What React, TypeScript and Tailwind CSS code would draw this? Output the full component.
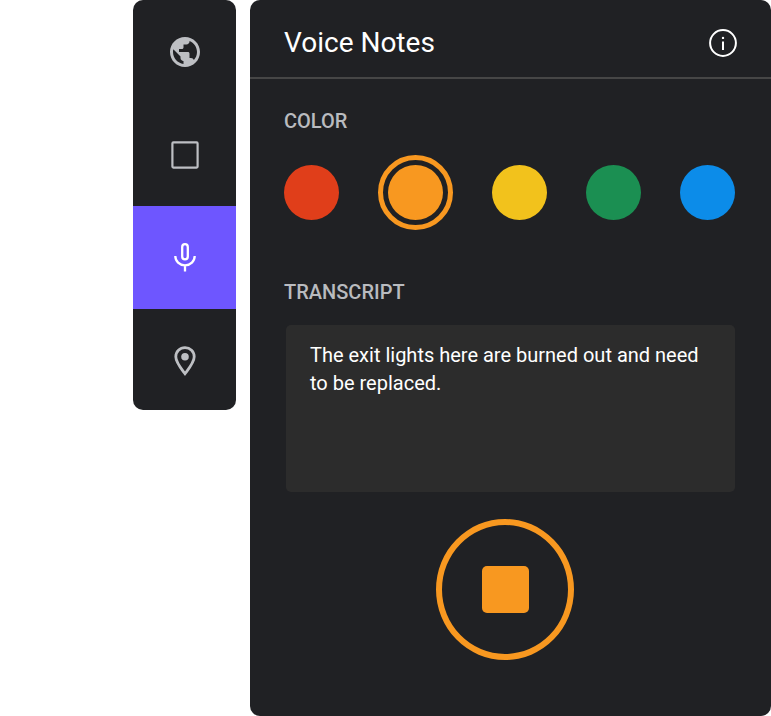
import { useState } from "react";
import { MdPublic } from "react-icons/md";

const swatches = [
  { name: "Red", fill: "bg-[#e03e1a]", ring: "border-[#e03e1a]" },
  { name: "Orange", fill: "bg-[#f89820]", ring: "border-[#f89820]" },
  { name: "Yellow", fill: "bg-[#f2c21c]", ring: "border-[#f2c21c]" },
  { name: "Green", fill: "bg-[#1b8f52]", ring: "border-[#1b8f52]" },
  { name: "Blue", fill: "bg-[#0c8ce9]", ring: "border-[#0c8ce9]" },
];

function SquareIcon() {
  return (
    <svg className="size-9" viewBox="0 0 36 36" fill="none" stroke="currentColor" strokeWidth="2.2" aria-hidden="true">
      <rect x="5.4" y="5.4" width="25.2" height="25.2" rx="1" />
    </svg>
  );
}

function MicIcon() {
  return (
    <svg className="size-9" viewBox="0 0 36 36" fill="none" stroke="currentColor" strokeWidth="2.3" aria-hidden="true">
      <rect x="15.2" y="4.1" width="5.6" height="15.2" rx="2.8" />
      <path d="M8.3 16c0 5.2 4.2 9.3 9.7 9.3s9.7-4.1 9.7-9.3M18 25.3v6.2" />
    </svg>
  );
}

function PinIcon() {
  return (
    <svg className="size-9" viewBox="0 0 36 36" aria-hidden="true">
      <path
        d="M18 5.6c-5.2 0-9.2 4-9.2 9.1 0 5.4 4.4 10.6 9.2 17 4.8-6.4 9.2-11.6 9.2-17 0-5.1-4-9.1-9.2-9.1Z"
        fill="none"
        stroke="currentColor"
        strokeWidth="2.8"
      />
      <circle cx="18" cy="14.8" r="3.8" fill="currentColor" />
    </svg>
  );
}

function InfoIcon() {
  return (
    <svg className="size-7" viewBox="0 0 28 28" aria-hidden="true">
      <circle cx="14" cy="14" r="12.9" fill="none" stroke="currentColor" strokeWidth="2" />
      <circle cx="14" cy="8.9" r="1.2" fill="currentColor" />
      <path d="M14 12.4v8.6" stroke="currentColor" strokeWidth="2" />
    </svg>
  );
}

const tools = [
  { name: "Map", icon: <MdPublic className="size-9" aria-hidden="true" /> },
  { name: "Shape", icon: <SquareIcon /> },
  { name: "Voice notes", icon: <MicIcon /> },
  { name: "Location", icon: <PinIcon /> },
];

export default function App() {
  const [tool, setTool] = useState("Voice notes");
  const [color, setColor] = useState("Orange");
  const [text, setText] = useState("The exit lights here are burned out and need to be replaced.");

  return (
    <div className="flex min-h-screen items-stretch gap-3.5 bg-white pl-[133px] font-[Roboto,sans-serif]">
      <nav className="flex w-[103px] shrink-0 flex-col self-start overflow-hidden rounded-[10px] bg-[#202124]" aria-label="Tools">
        {tools.map((t) => (
          <button
            key={t.name}
            type="button"
            aria-label={t.name}
            aria-pressed={tool === t.name}
            onClick={() => setTool(t.name)}
            className={`flex h-[103px] items-center justify-center last:h-[101px] ${
              tool === t.name ? "bg-[#6e56ff] text-white" : "text-[#bdbfc3]"
            }`}
          >
            {t.icon}
          </button>
        ))}
      </nav>

      <main className="min-w-0 flex-1 rounded-[10px] bg-[#202124] pb-14">
        <header className="flex items-center justify-between border-b-2 border-[#464646] px-[34px] pt-[25px] pb-4">
          <h1 className="text-[28px] leading-9 text-white">Voice Notes</h1>
          <button type="button" aria-label="About voice notes" className="text-white">
            <InfoIcon />
          </button>
        </header>

        <div className="pr-9 pl-[34px]">
          <h2 id="color-label" className="pt-7 text-xl leading-7 font-medium text-[#b9bbbf]">
            COLOR
          </h2>
          <div role="radiogroup" aria-labelledby="color-label" className="mt-5 flex h-[75px] items-center justify-between">
            {swatches.map((s) => (
              <input
                key={s.name}
                type="radio"
                name="color"
                aria-label={s.name}
                checked={color === s.name}
                onChange={() => setColor(s.name)}
                className={`size-[55px] shrink-0 appearance-none rounded-full bg-clip-content checked:size-[75px] checked:border-[5px] checked:p-[5px] ${s.fill} ${s.ring}`}
              />
            ))}
          </div>

          <label htmlFor="transcript" className="mt-12 block text-xl leading-7 font-medium text-[#b9bbbf]">
            TRANSCRIPT
          </label>
          <div className="mt-[19px] pl-0.5">
            <textarea
              id="transcript"
              value={text}
              onChange={(e) => setText(e.target.value)}
              className="block h-[167px] w-full resize-none rounded-[5px] bg-[#2c2c2c] px-6 py-4 text-xl leading-7 text-white outline-none"
            />
          </div>
        </div>

        <div className="flex justify-center pt-[27px] pr-[11px]">
          <button
            type="button"
            aria-label="Stop recording"
            className="flex h-[141px] w-[138px] items-center justify-center rounded-[50%] border-[6px] border-[#f89820]"
          >
            <span className="size-[47px] rounded-[5px] bg-[#f89820]" />
          </button>
        </div>
      </main>
    </div>
  );
}
